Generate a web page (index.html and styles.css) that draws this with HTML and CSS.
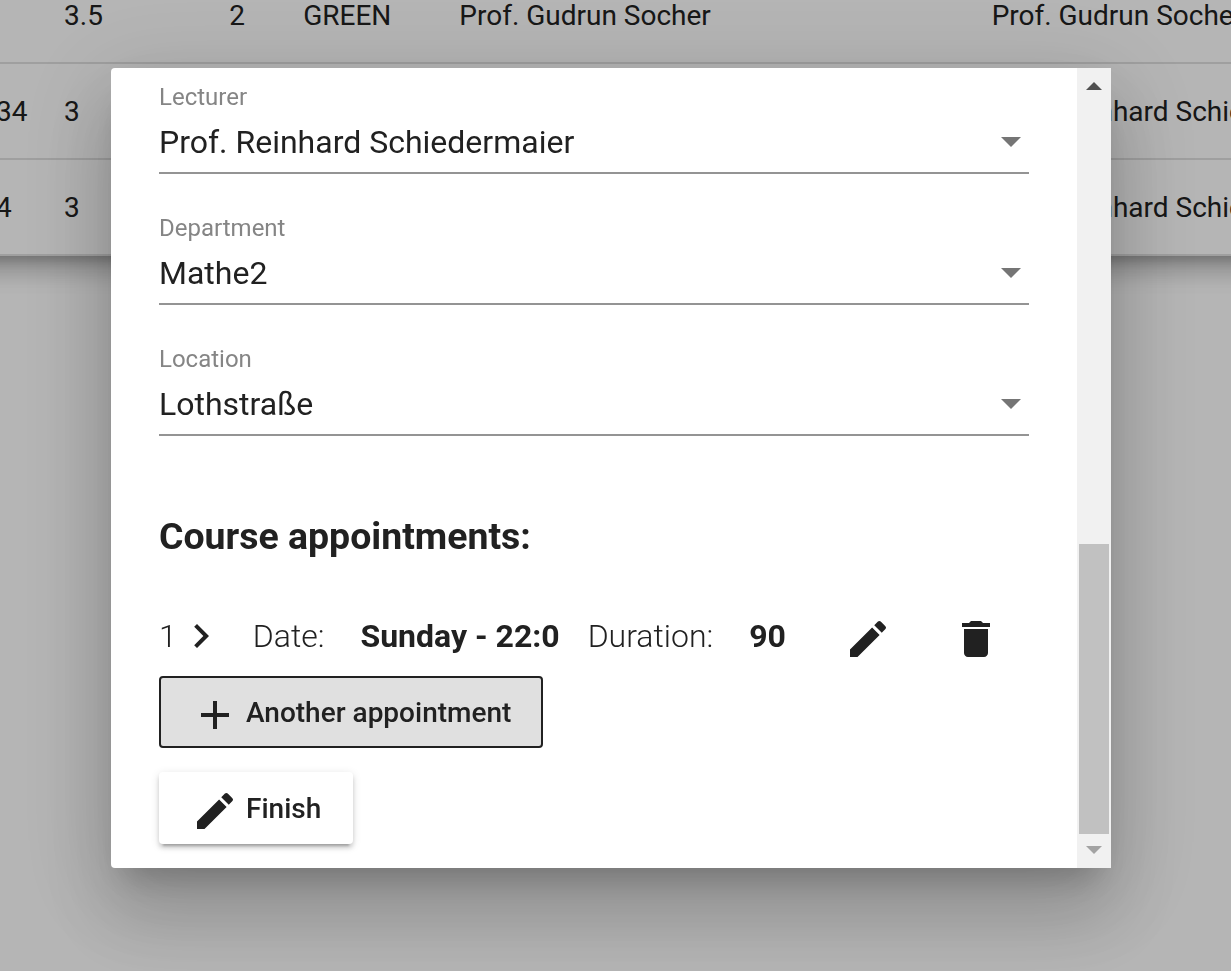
FILE: index.html
```html
<!DOCTYPE html>
<html lang="en">
<head>
<meta charset="utf-8">
<title>Course appointments</title>
<link rel="stylesheet" href="styles.css">
</head>
<body>
<main class="page">
  <table class="courses">
    <colgroup>
      <col class="col-id"><col class="col-hours"><col class="col-count"><col class="col-state"><col class="col-person"><col class="col-person">
    </colgroup>
    <tbody>
      <tr><td></td><td>3.5</td><td>2</td><td>GREEN</td><td>Prof. Gudrun Socher</td><td>Prof. Gudrun Socher</td></tr>
      <tr><td>34</td><td>3</td><td></td><td></td><td></td><td>Prof. Reinhard Schiedermaier</td></tr>
      <tr><td>4</td><td>3</td><td></td><td></td><td></td><td>Prof. Reinhard Schiedermaier</td></tr>
    </tbody>
  </table>
</main>

<div class="backdrop">
  <section class="dialog" role="dialog" aria-modal="true" aria-labelledby="appointments-title">
    <form class="content">
      <div class="fields">
        <div class="field">
          <label class="field-label" for="lecturer">Lecturer</label>
          <div class="field-control">
            <select class="field-select" id="lecturer"><option>Prof. Reinhard Schiedermaier</option></select>
            <svg class="field-arrow" viewBox="0 0 20 10" aria-hidden="true"><path d="M0 0h20L10 10z"/></svg>
          </div>
        </div>
        <div class="field">
          <label class="field-label" for="department">Department</label>
          <div class="field-control">
            <select class="field-select" id="department"><option>Mathe2</option></select>
            <svg class="field-arrow" viewBox="0 0 20 10" aria-hidden="true"><path d="M0 0h20L10 10z"/></svg>
          </div>
        </div>
        <div class="field">
          <label class="field-label" for="location">Location</label>
          <div class="field-control">
            <select class="field-select" id="location"><option>Lothstraße</option></select>
            <svg class="field-arrow" viewBox="0 0 20 10" aria-hidden="true"><path d="M0 0h20L10 10z"/></svg>
          </div>
        </div>
      </div>

      <h3 class="title" id="appointments-title">Course appointments:</h3>

      <div class="appointment">
        <span>1</span>
        <svg class="icon" viewBox="0 0 24 24" aria-hidden="true"><path d="M10 6 8.590 7.410 13.170 12l-4.580 4.590L10 18l6-6z"/></svg>
        <span class="term">Date:</span>
        <strong class="value">Sunday - 22:0</strong>
        <span class="term">Duration:</span>
        <strong class="value">90</strong>
        <button class="icon-button" type="button" aria-label="Edit appointment">
          <svg class="icon" viewBox="0 0 24 24" aria-hidden="true"><path d="M3 17.250V21h3.750L17.810 9.940l-3.750-3.750L3 17.250zM20.710 7.040a1 1 0 0 0 0-1.410l-2.340-2.340a1 1 0 0 0-1.410 0l-1.830 1.830 3.750 3.750 1.830-1.830z"/></svg>
        </button>
        <button class="icon-button" type="button" aria-label="Delete appointment">
          <svg class="icon" viewBox="0 0 24 24" aria-hidden="true"><path d="M6 19c0 1.100.9 2 2 2h8c1.100 0 2-.9 2-2V7H6v12zM19 4h-3.500l-1-1h-5l-1 1H5v2h14V4z"/></svg>
        </button>
      </div>

      <div class="actions">
        <button class="button button-focused" type="button">
          <svg class="icon" viewBox="0 0 24 24" aria-hidden="true"><path d="M19 13h-6v6h-2v-6H5v-2h6V5h2v6h6v2z"/></svg>
          <span>Another appointment</span>
        </button>
        <button class="button button-raised" type="button">
          <svg class="icon" viewBox="0 0 24 24" aria-hidden="true"><path d="M3 17.250V21h3.750L17.810 9.940l-3.750-3.750L3 17.250zM20.710 7.040a1 1 0 0 0 0-1.410l-2.340-2.340a1 1 0 0 0-1.410 0l-1.830 1.830 3.750 3.750 1.830-1.830z"/></svg>
          <span>Finish</span>
        </button>
      </div>
    </form>

    <div class="scrollbar" aria-hidden="true">
      <svg class="scroll-arrow" viewBox="0 0 34 34"><path fill="#505050" d="M9 22h16L17 14z"/></svg>
      <div class="scroll-track"><div class="scroll-thumb"></div></div>
      <svg class="scroll-arrow" viewBox="0 0 34 34"><path fill="#a3a3a3" d="M9 12h16L17 20z"/></svg>
    </div>
  </section>
</div>
</body>
</html>
```
FILE: styles.css
```css
* {
  box-sizing: border-box;
}

body {
  margin: 0;
  font-family: Roboto, "Liberation Sans", sans-serif;
  color: #212121;
  background: #fff;
}

.page {
  height: 100vh;
  overflow: hidden;
}

/* Course table, scrolled up and to the left behind the dialog */
.courses {
  width: 1624px;
  margin: -32px 0 0 -100px;
  table-layout: fixed;
  border-collapse: separate;
  border-spacing: 0;
  font-size: 28px;
  background: #fff;
  box-shadow:
    0 10px 10px -6px rgba(0, 0, 0, 0.2),
    0 16px 20px 2px rgba(0, 0, 0, 0.14),
    0 6px 28px 4px rgba(0, 0, 0, 0.12);
}

.courses td {
  height: 96px;
  padding: 0;
  border-bottom: 2px solid #e0e0e0;
  white-space: nowrap;
}

.courses td:first-child {
  padding-left: 96px;
}

.col-id { width: 164px; }
.col-hours { width: 165px; }
.col-count { width: 74px; }
.col-state { width: 156px; }
.col-person { width: 532px; }

.backdrop {
  position: fixed;
  inset: 0;
  display: flex;
  align-items: flex-start;
  padding: 68px 120px 68px 111px;
  overflow: hidden;
  background: rgba(0, 0, 0, 0.29);
}

.dialog {
  flex: 1;
  display: flex;
  border-radius: 4px 0 0 4px;
  background: #fff;
  box-shadow:
    0 22px 30px -14px rgba(0, 0, 0, 0.2),
    0 48px 76px 6px rgba(0, 0, 0, 0.14),
    0 18px 92px 16px rgba(0, 0, 0, 0.12);
}

.content {
  flex: 1;
  min-width: 0;
  padding: 13px 48px 24px;
  font-size: 32px;
}

.fields {
  display: flex;
  flex-direction: column;
  gap: 38px;
}

.field {
  display: flex;
  flex-direction: column;
}

.field-label {
  font-size: 24px;
  line-height: 32px;
  color: #858585;
}

.field-control {
  display: grid;
  align-items: center;
}

.field-select,
.field-arrow {
  grid-area: 1 / 1;
}

.field-select {
  width: 100%;
  height: 61px;
  margin: 0;
  padding: 0 0 2px;
  appearance: none;
  border: 0;
  border-bottom: 2px solid #949494;
  border-radius: 0;
  background: transparent;
  font: inherit;
  color: inherit;
}

.field-arrow {
  justify-self: end;
  width: 20px;
  height: 10px;
  margin: 0 8px 3px 0;
  fill: #757575;
  pointer-events: none;
}

.title {
  margin: 76px 0 52px;
  font-weight: 700;
  line-height: 48px;
}

.appointment {
  display: flex;
  align-items: center;
  margin-bottom: 16px;
  font-weight: 300;
  line-height: 48px;
  white-space: nowrap;
}

.icon {
  display: block;
  flex: none;
  width: 48px;
  height: 48px;
  fill: currentColor;
}

.term {
  margin-left: 28px;
}

.value {
  margin-left: 36px;
  font-weight: 700;
}

.icon-button {
  margin: 3px 0 -3px 60px;
  padding: 0;
  border: 0;
  background: none;
  color: inherit;
}

.value + .icon-button {
  margin-left: 58px;
}

.actions {
  display: flex;
  flex-direction: column;
  align-items: flex-start;
  gap: 24px;
}

.button {
  display: flex;
  align-items: center;
  gap: 7px;
  height: 72px;
  padding: 5px 32px 0;
  border: 0;
  border-radius: 4px;
  font: inherit;
  font-size: 28px;
  font-weight: 500;
  color: inherit;
}

.button span {
  margin-top: -5px;
}

.button-focused {
  padding: 5px 30px 0;
  border: 2px solid #212121;
  background: #e0e0e0;
}

.button-raised {
  background: #fff;
  box-shadow:
    0 6px 2px -4px rgba(0, 0, 0, 0.2),
    0 4px 4px 0 rgba(0, 0, 0, 0.14),
    0 2px 10px 0 rgba(0, 0, 0, 0.12);
}

.scrollbar {
  flex: none;
  display: flex;
  flex-direction: column;
  width: 34px;
  background: #f1f1f1;
}

.scroll-arrow {
  flex: none;
  width: 34px;
  height: 34px;
}

.scroll-track {
  flex: 1;
  display: flex;
  align-items: flex-end;
  padding: 0 2px;
}

.scroll-thumb {
  flex: 1;
  height: 290px;
  background: #c1c1c1;
}
```
